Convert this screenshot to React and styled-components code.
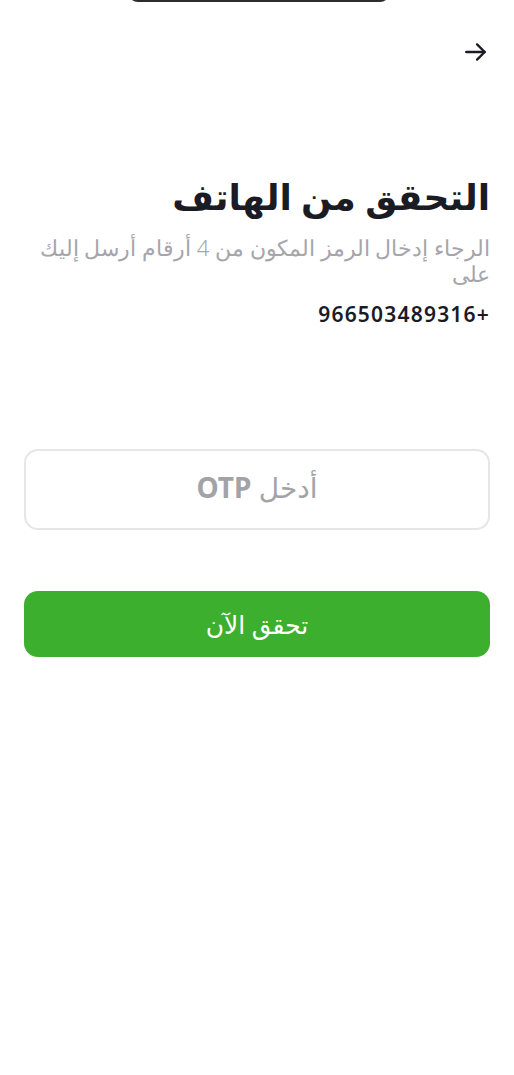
import React from "react";
import styled, { createGlobalStyle } from "styled-components";

const Global = createGlobalStyle`
  html, body {
    margin: 0;
    padding: 0;
    background: #ffffff;
  }
  body {
    font-family: "Noto Sans", "DejaVu Sans", sans-serif;
  }
`;

const Page = styled.div`
  position: relative;
  width: 514px;
  min-height: 1075px;
  background: #ffffff;
  direction: rtl;
  padding: 0 24px;
  box-sizing: border-box;
`;

const Notch = styled.div`
  position: absolute;
  top: -8px;
  left: 128px;
  width: 262px;
  height: 10px;
  background: #2c2c2e;
  border-radius: 0 0 10px 10px;
`;

const TopBar = styled.div`
  display: flex;
  justify-content: flex-start;
  padding-top: 38px;
  height: 28px;
`;

const BackButton = styled.button`
  border: none;
  background: none;
  padding: 0;
  width: 28px;
  height: 28px;
  display: flex;
  align-items: center;
  justify-content: center;
  color: #1b1b24;
  cursor: pointer;
`;

const Header = styled.div`
  margin-top: 105px;
  display: flex;
  flex-direction: column;
`;

const Title = styled.h1`
  margin: 0;
  font-size: 36px;
  font-weight: 700;
  color: #1b1b24;
  line-height: 52px;
`;

const Subtitle = styled.p`
  margin: 11px 0 0;
  font-size: 22px;
  font-weight: 300;
  color: #a5a5ab;
  line-height: 26px;
`;

const Phone = styled.p`
  margin: 14px 0 0;
  font-size: 21px;
  font-weight: 600;
  letter-spacing: 1.2px;
  color: #1b1b24;
  line-height: 28px;
  direction: ltr;
  text-align: right;
`;

const Field = styled.div`
  margin-top: 121px;
  height: 81px;
  border: 2px solid #e6e6e8;
  border-radius: 14px;
  box-sizing: border-box;
  display: flex;
  align-items: center;
  justify-content: center;
  padding-bottom: 6px;
  font-size: 28px;
  color: #a3a3a7;
`;

const Bold = styled.span`
  font-weight: 700;
`;

const Submit = styled.button`
  margin-top: 61px;
  width: 100%;
  height: 66px;
  border: none;
  border-radius: 14px;
  background: #3daf2e;
  color: #ffffff;
  font-family: inherit;
  font-size: 25px;
  font-weight: 500;
  cursor: pointer;
`;

export default function App() {
  return (
    <>
      <Global />
      <Page>
        <Notch />
        <TopBar>
          <BackButton aria-label="back">
            <svg width="26" height="26" viewBox="0 0 24 24" fill="none" stroke="currentColor" strokeWidth="2.2" strokeLinecap="round" strokeLinejoin="round">
              <path d="M3 12h17" />
              <path d="M13 5l7 7-7 7" />
            </svg>
          </BackButton>
        </TopBar>
        <Header>
          <Title>التحقق من الهاتف</Title>
          <Subtitle>الرجاء إدخال الرمز المكون من 4 أرقام أرسل إليك على</Subtitle>
          <Phone>966503489316+</Phone>
        </Header>
        <Field>
          أدخل <Bold>&nbsp;OTP</Bold>
        </Field>
        <Submit>تحقق الآن</Submit>
      </Page>
    </>
  );
}
